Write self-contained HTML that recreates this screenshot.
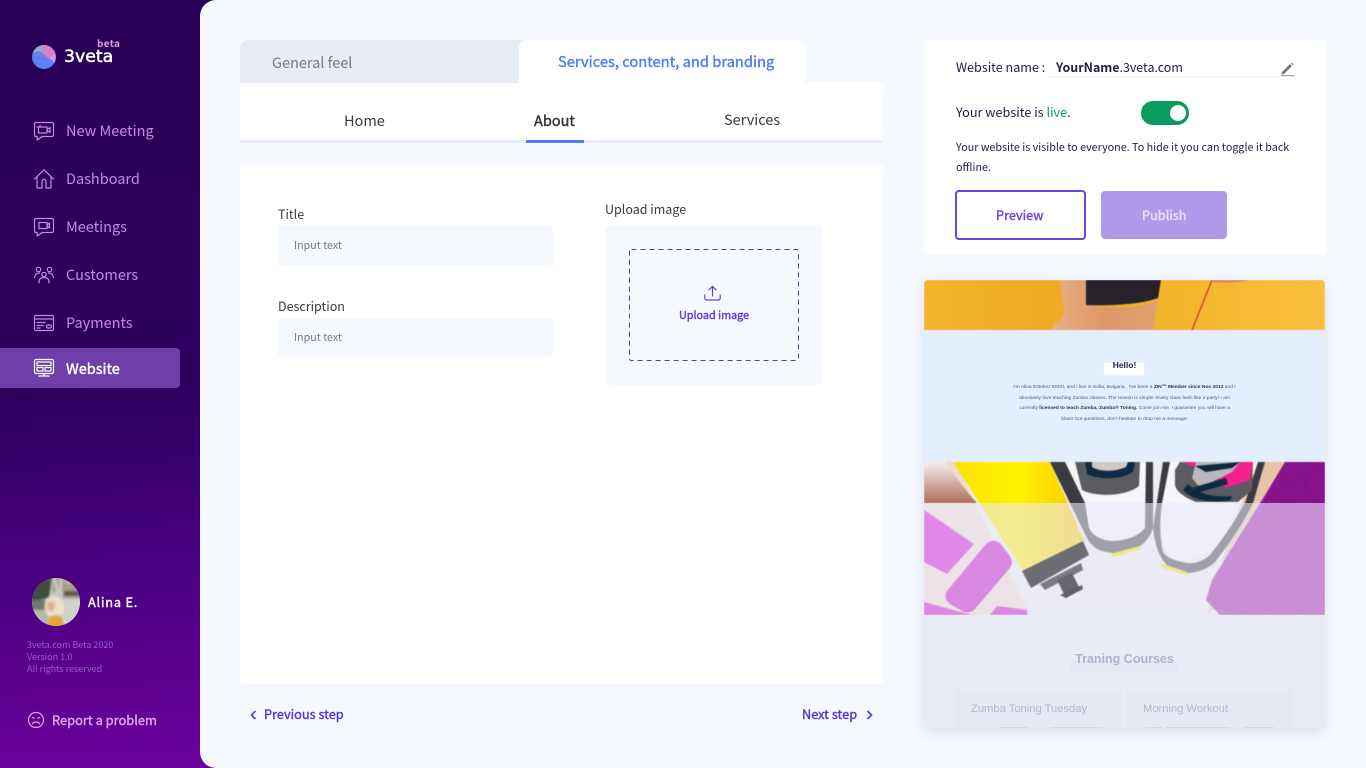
<!DOCTYPE html>
<html lang="en"><head><meta charset="utf-8"><title>3veta Website</title>
<style>
*{box-sizing:border-box}
html,body{margin:0;padding:0;width:1366px;height:768px;overflow:hidden}
body{position:relative;background:#f6f9ff;font-family:"Noto Sans CJK JP","Liberation Sans",sans-serif;color:#333}
.a{position:absolute}
.t{position:absolute;white-space:nowrap;line-height:20px;height:20px}
.sb{-webkit-text-stroke:.38px currentColor}
.nav{font-size:14.5px;color:#c48ae6;left:66px}
svg{position:absolute;overflow:visible}
.ic{fill:none;stroke:#c48ae6;stroke-width:1.2;stroke-linecap:round;stroke-linejoin:round}
</style></head><body>
<div class="a" style="left:0;top:0;width:220px;height:768px;background:linear-gradient(176deg,#2a0055 0%,#2d005e 50%,#48007f 73%,#6c009e 100%)"></div>

<!-- logo -->
<svg style="left:32px;top:45px" width="24" height="24" viewBox="0 0 24 24">
<defs><linearGradient id="lg" x1="0" y1="1" x2=".6" y2="0"><stop offset="0" stop-color="#3f8bf5"/><stop offset=".55" stop-color="#6a7cf0"/><stop offset="1" stop-color="#a98bee"/></linearGradient></defs>
<circle cx="12" cy="12" r="12" fill="url(#lg)"/>
<path d="M12 0A12 12 0 0 1 23 8C21 11 18 13 15 12C12 10 11 5 12 0Z" fill="#e07cc8"/>
<path d="M12 0C6 0 2 4 1 8C5 5 10 6 13 10C11 6 11 3 12 0Z" fill="#8fb4b8"/>
<path d="M23 8A12 12 0 0 1 22 18C20 14 17 13 15 12C18 13 21 11 23 8Z" fill="#c99cf2"/>
</svg>
<div class="t" style="left:64px;top:47px;font:400 17.300px/20px 'DejaVu Sans',sans-serif;color:#fff;-webkit-text-stroke:.5px #fff">3veta</div>
<div class="t" style="left:97px;top:33px;font-size:10px;font-weight:700;color:#dc9ede;letter-spacing:.3px">beta</div>

<!-- nav -->
<div class="t nav" style="top:121px">New Meeting</div>
<div class="t nav" style="top:169px">Dashboard</div>
<div class="t nav" style="top:217px">Meetings</div>
<div class="t nav" style="top:265px">Customers</div>
<div class="t nav" style="top:313px">Payments</div>
<div class="a" style="left:0;top:348px;width:180px;height:40px;background:#6f3ea9;border-radius:0 4px 4px 0"></div>
<div class="t sb" style="left:66px;top:359px;font-size:14.500px;color:#fff">Website</div>

<svg class="ic" style="left:34px;top:122px" width="20" height="20" viewBox="0 0 20 20"><path d="M2 .5H18A1.5 1.5 0 0 1 19.500 2V13A1.500 1.500 0 0 1 18 14.500H8L3.500 18L3 14.500H2A1.500 1.500 0 0 1 .5 13V2A1.500 1.500 0 0 1 2 .5Z"/><path d="M4.500 5H13V11H4.500ZM13 7.500L16 5.500V10.500L13 8.500M3 5H6M6 3.500V5"/></svg>
<svg class="ic" style="left:34px;top:169px" width="20" height="20" viewBox="0 0 20 20"><path d="M.5 10L10 .8L19.500 10M3 8V19H8V12.500A2 2 0 0 1 12 12.500V19H17V8"/></svg>
<svg class="ic" style="left:34px;top:218px" width="20" height="20" viewBox="0 0 20 20"><path d="M2 .5H18A1.500 1.500 0 0 1 19.500 2V13A1.500 1.500 0 0 1 18 14.500H8L3.500 18L3 14.500H2A1.500 1.500 0 0 1 .5 13V2A1.500 1.500 0 0 1 2 .5Z"/><path d="M5 4.500H13V10.500H5ZM13 7L15.500 5V10L13 8"/></svg>
<svg class="ic" style="left:34px;top:266px" width="20" height="18" viewBox="0 0 20 18"><circle cx="4.500" cy="3.500" r="2.200"/><circle cx="15.500" cy="3.500" r="2.200"/><circle cx="10" cy="8.500" r="2.200"/><path d="M.5 11.500C1 8 3 7 5.500 7M19.500 11.500C19 8 17 7 14.500 7M5 17V15.500C5 12.500 7.500 11.500 10 11.500C12.500 11.500 15 12.500 15 15.500V17"/></svg>
<svg class="ic" style="left:34px;top:315px" width="20" height="16" viewBox="0 0 20 16"><rect x=".5" y=".5" width="19" height="15" rx="1.500"/><path d="M.5 4H19.500M3 7.500H11M3 10.500H9M3 13H6"/><rect x="12.500" y="10" width="5" height="3" rx="1.500"/></svg>
<svg class="ic" style="left:34px;top:359px;stroke:#fff" width="20" height="18" viewBox="0 0 20 18"><rect x=".5" y=".5" width="19" height="14" rx="1.500"/><rect x="3" y="3" width="14" height="3.500"/><rect x="3" y="8.500" width="6" height="3.500"/><rect x="11" y="8.500" width="6" height="3.500"/><path d="M10 14.500V17M5 17H15"/></svg>

<!-- avatar -->
<svg style="left:32px;top:578px" width="48" height="48" viewBox="0 0 48 48">
<defs><clipPath id="av"><circle cx="24" cy="24" r="24"/></clipPath><filter id="b1"><feGaussianBlur stdDeviation="1"/></filter></defs>
<g clip-path="url(#av)"><rect width="48" height="48" fill="#c5c8c0"/>
<g filter="url(#b1)"><path d="M-2 -2H20L17 20L-2 24Z" fill="#3f4d3e"/><path d="M20 -2H36L34 14H20Z" fill="#a8a899"/><path d="M22 0L26 14M29 0L28 14" stroke="#d4d2c6" stroke-width="2"/><path d="M31 6H50V20H31Z" fill="#a39a88"/><path d="M32 13H50V18H32Z" fill="#5f5a50"/><path d="M-2 22H14V32H-2Z" fill="#70786c"/><path d="M-2 32H16V50H-2Z" fill="#b4baaf"/><path d="M30 22H50V50H30Z" fill="#cfd3ce"/>
<path d="M13 30C12 22 16 18 22 18C28 18 33 24 32 31C32 35 30 38 26 38H18C15 38 13 34 13 30Z" fill="#ebe1c7"/><ellipse cx="19" cy="28" rx="4" ry="5" fill="#d9b097"/>
<path d="M15 50C15 41 18 37 23 37C29 37 32 41 32 50Z" fill="#e3a838"/></g></g></svg>
<div class="t sb" style="left:88px;top:592px;font-size:12.750px;color:#fff;letter-spacing:.8px">Alina E.</div>
<div class="t" style="left:27px;top:635px;font-size:9px;color:#9b5cc9">3veta.com Beta 2020</div>
<div class="t" style="left:27px;top:647px;font-size:9px;color:#9b5cc9">Version 1.0</div>
<div class="t" style="left:27px;top:659px;font-size:9px;color:#9b5cc9">All rights reserved</div>
<svg class="ic" style="left:28px;top:712px;stroke:#dba6ee" width="16" height="16" viewBox="0 0 16 16"><circle cx="8" cy="8" r="7.500"/><path d="M4.500 11.500C6 9.500 10 9.500 11.500 11.500M4.500 5.500L6 6.200M11.500 5.500L10 6.200"/></svg>
<div class="t sb" style="left:52px;top:710px;font-size:12.850px;color:#dba6ee">Report a problem</div>

<!-- main -->
<div class="a" style="left:200px;top:0;width:1166px;height:768px;background:#f6f9ff;border-radius:16px 0 0 16px"></div>

<!-- tabs -->
<div class="a" style="left:240px;top:40px;width:290px;height:43px;background:#e8ecf5;border-radius:8px 0 0 0"></div>
<div class="a" style="left:519px;top:40px;width:286px;height:44px;background:#fff;border-radius:8px 8px 0 0"></div>
<div class="t" style="left:272px;top:53px;font-size:14.500px;color:#777a80">General feel</div>
<div class="t sb" style="left:558px;top:52px;font-size:14.700px;color:#4f7ef6">Services, content, and branding</div>
<div class="a" style="left:240px;top:83px;width:643px;height:57px;background:#fff"></div>
<div class="a" style="left:240px;top:140px;width:643px;height:3px;background:#e9eef8"></div>
<div class="a" style="left:526px;top:140px;width:58px;height:3px;background:#4f7ef6"></div>
<div class="t" style="left:344px;top:111px;font-size:14.500px;color:#3a3a3a">Home</div>
<div class="t sb" style="left:534px;top:111px;font-size:14.500px;color:#333">About</div>
<div class="t" style="left:724px;top:110px;font-size:14.500px;color:#3a3a3a">Services</div>

<!-- form -->
<div class="a" style="left:240px;top:165px;width:643px;height:519px;background:#fff;border-radius:2px"></div>
<div class="t" style="left:278px;top:204px;font-size:12.500px;color:#3a3a3a">Title</div>
<div class="a" style="left:278px;top:225px;width:275px;height:40px;background:#f6f9ff;border-radius:4px"></div>
<div class="t" style="left:294px;top:236px;font-size:10.700px;color:#777">Input text</div>
<div class="t" style="left:278px;top:296px;font-size:12.500px;color:#3a3a3a">Description</div>
<div class="a" style="left:278px;top:317px;width:275px;height:40px;background:#f6f9ff;border-radius:4px"></div>
<div class="t" style="left:294px;top:328px;font-size:10.700px;color:#777">Input text</div>
<div class="t" style="left:605px;top:199px;font-size:12.500px;color:#3a3a3a">Upload image</div>
<div class="a" style="left:605px;top:225px;width:218px;height:160px;background:#f6f9ff;border-radius:6px"></div>
<svg style="left:629px;top:249px" width="170" height="112"><rect x=".5" y=".5" width="169" height="111" rx="2" fill="none" stroke="#5a2fd8" stroke-width="1" stroke-dasharray="5 4"/></svg>
<svg style="left:704px;top:285px" width="17" height="16" viewBox="0 0 17 16" fill="none" stroke="#6a3fdc" stroke-width="1.200" stroke-linecap="round" stroke-linejoin="round"><path d="M8.500 11V1.500M5 4.800L8.500 1.300L12 4.800M.8 10V13A2 2 0 0 0 2.800 15H14.200A2 2 0 0 0 16.200 13V10"/></svg>
<div class="t sb" style="left:679px;top:305px;font-size:10.800px;color:#6238dc">Upload image</div>

<!-- steps -->
<svg style="left:250px;top:710px" width="7" height="10" viewBox="0 0 7 10" fill="none" stroke="#5a35d9" stroke-width="1.600"><path d="M5.500 1L1.500 5L5.500 9"/></svg>
<div class="t sb" style="left:264px;top:704px;font-size:12.750px;color:#5a35d9">Previous step</div>
<div class="t sb" style="left:802px;top:704px;font-size:12.750px;color:#5a35d9">Next step</div>
<svg style="left:866px;top:710px" width="7" height="10" viewBox="0 0 7 10" fill="none" stroke="#5a35d9" stroke-width="1.600"><path d="M1.500 1L5.500 5L1.500 9"/></svg>

<!-- right card -->
<div class="a" style="left:924px;top:40px;width:402px;height:215px;background:#fff;border-radius:4px"></div>
<div class="t" style="left:956px;top:57px;font-size:12.600px;color:#1e1e4e">Website name :</div>
<div class="t" style="left:1056px;top:57px;font-size:12.450px;color:#1e1e4e"><b>YourName</b>.3veta.com</div>
<div class="a" style="left:1049px;top:76px;width:246px;height:1px;background:#f0f1f4"></div>
<svg style="left:1281px;top:62px" width="13" height="14" viewBox="0 0 13 14"><path d="M1 10L9 2L11 4L3 12L.6 12.500Z" fill="#777"/><path d="M9.800 1.200L10.600.6L12.400 2.400L11.800 3.200Z" fill="#777"/><path d="M0 13.500H13" stroke="#999" stroke-width="1"/></svg>
<div class="t" style="left:956px;top:102px;font-size:12.700px;color:#1e1e4e">Your website is <span style="color:#0b9b60">live</span>.</div>
<div class="a" style="left:1141px;top:101px;width:48px;height:24px;border-radius:12px;background:#0a9b5f"></div>
<div class="a" style="left:1170px;top:105px;width:16px;height:16px;border-radius:50%;background:#fff"></div>
<div class="t" style="left:956px;top:138px;font-size:10.750px;color:#1e1e4e">Your website is visible to everyone. To hide it you can toggle it back</div>
<div class="t" style="left:956px;top:158px;font-size:10.750px;color:#1e1e4e">offline.</div>
<div class="a" style="left:955px;top:190px;width:131px;height:50px;border:2px solid #6c44dc;border-radius:4px;background:#fff"></div>
<div class="t sb" style="left:996px;top:205px;font-size:12.750px;color:#6c44dc">Preview</div>
<div class="a" style="left:1101px;top:191px;width:126px;height:48px;border-radius:4px;background:#af99e9"></div>
<div class="t sb" style="left:1142px;top:205px;font-size:12.750px;color:#e9e2fa">Publish</div>

<!-- preview -->
<div class="a" style="left:924px;top:280px;width:401px;height:448px;box-shadow:0 4px 14px rgba(120,130,170,.22);border-radius:4px;background:#e9ecf5"></div>
<div class="a" style="left:924px;top:280px;width:401px;height:448px;overflow:hidden;border-radius:4px;background:#e9ecf5">
<svg style="left:0;top:0;filter:blur(.6px)" width="401" height="448" viewBox="924 280 401 448">
<defs>
<linearGradient id="y1" x1="0" x2="1"><stop offset="0" stop-color="#f4b62d"/><stop offset=".3" stop-color="#eeaa24"/><stop offset=".7" stop-color="#f5b730"/><stop offset="1" stop-color="#f8c03c"/></linearGradient>
<linearGradient id="sk" x1="0" x2="0" y1="0" y2="1"><stop offset="0" stop-color="#f7efee"/><stop offset="1" stop-color="#b0705a"/></linearGradient>
<linearGradient id="yb" x1="0" x2="1" y1="0" y2="0"><stop offset="0" stop-color="#fbe300"/><stop offset=".5" stop-color="#fff200"/><stop offset="1" stop-color="#fdc800"/></linearGradient>
<linearGradient id="tor" x1="0" x2="1"><stop offset="0" stop-color="#eab088"/><stop offset=".5" stop-color="#dd9868"/><stop offset="1" stop-color="#e2a070"/></linearGradient>
<filter id="nz" x="0" y="0" width="100%" height="100%"><feTurbulence type="fractalNoise" baseFrequency=".7" numOctaves="2" seed="4"/><feColorMatrix values="0 0 0 0 .2  0 0 0 0 0  0 0 0 0 .25  0 0 0 2.2 -.9"/><feComposite in2="SourceGraphic" operator="in"/></filter>
</defs>
<!-- banner -->
<rect x="924" y="280" width="401" height="50" fill="url(#y1)"/>
<path d="M1060 280H1087L1086 304C1105 309 1140 309 1158 300L1153 330H1050C1056 322 1062 320 1064 312Z" fill="url(#tor)"/>
<path d="M1086 280H1161L1158 298C1140 305 1105 306 1086 305Z" fill="#27222a"/>
<path d="M1212 280L1192 330" stroke="#cf3a28" stroke-width="1.300"/>
<path d="M1212 280H1249C1240 283 1222 283 1212 282Z" fill="#d98a5c"/>
<!-- about -->
<rect x="924" y="330" width="401" height="132" fill="#e4eefe"/>
<rect x="1104" y="363" width="40" height="12" fill="#fff"/>
<!-- photo -->
<rect x="924" y="462" width="401" height="153" fill="#ecedf3"/>
<path d="M924 462H955L1030 615H924Z" fill="#efd9d0"/>
<path d="M924 462H945C955 475 965 490 977 503H924Z" fill="url(#sk)"/>
<path d="M1028 615C1028 600 1025 585 1018 570L1090 620Z" fill="#ecedf3"/>
<path d="M1258 462H1325V520L1207 615C1222 560 1240 500 1258 462Z" fill="#e6c4a8"/>
<path d="M953 462H1050L1084 541L1023 571Z" fill="url(#yb)"/>
<!-- left dumbbell -->
<path d="M924 510L974 544L947 574L924 562Z" fill="#d200d1"/>
<path d="M947 591L986 544Q992 538 1000 543L1010 556Q1014 563 1009 569L975 609Q970 614 964 612L950 604Q943 598 947 591Z" fill="#c000c8"/>
<path d="M924 602L972 615H924ZM990 615L997 606L1027 610L1027 615Z" fill="#c800c8"/>
<!-- shoes -->
<path d="M1068 462H1148C1152 490 1154 525 1148 535C1130 552 1100 552 1088 535C1080 515 1072 485 1068 462Z" fill="#f6f6fa"/>
<path d="M1170 462H1258C1250 485 1238 515 1222 540C1208 560 1175 568 1165 552C1158 530 1162 490 1170 462Z" fill="#f6f6fa"/>
<path d="M1050 462H1065L1085 503L1089 528Q1095 540 1113 541Q1135 540 1145 528L1146 462H1153L1153 528Q1145 553 1113 553Q1094 552 1087 538Z" fill="#3a3a40"/>
<path d="M1170 462H1163L1153 528Q1158 573 1187 573Q1205 572 1215 562Q1240 530 1253 503L1265 462H1258L1245 503Q1230 530 1210 555Q1200 564 1187 563Q1168 560 1163 552Q1158 530 1162 503Z" fill="#3a3a40"/>
<path d="M1110 554L1140 546L1142 549L1114 557ZM1160 563L1187 572L1190 576L1163 568Z" fill="#f7e100"/>
<path d="M1075 462H1140L1139 486C1125 497 1095 497 1082 490Z" fill="#5b5b60"/>
<path d="M1085 462H1135L1133 472C1120 480 1100 480 1087 474Z" fill="#0f2a42"/>
<path d="M1092 462H1128L1126 467C1115 472 1100 472 1092 467Z" fill="#cfc9c5"/>
<path d="M1175 470L1180 462H1253L1252 490L1238 502H1196C1186 498 1176 492 1175 485Z" fill="#5a5a60"/>
<path d="M1182 462H1253L1250 480L1226 488L1216 475Z" fill="#f5208c"/>
<path d="M1196 462H1240L1232 472L1200 488L1192 478Z" fill="#b8b8bc"/>
<path d="M1195 466L1240 462L1232 468L1206 472ZM1191 488L1226 478L1228 484L1200 492ZM1183 490C1192 500 1210 504 1231 500L1232 496C1215 498 1198 494 1188 484Z" fill="#0e2840"/>
<!-- towel -->
<path d="M1285 462H1325V615H1220L1206 600L1212 580L1262 500Z" fill="#a818b0"/>
<path d="M1285 462H1325V503H1262Z" fill="#8a1a8a"/>
<path d="M1285 462H1325V615H1220L1206 600L1212 580L1262 500Z" filter="url(#nz)"/>
<rect x="924" y="615" width="401" height="113" fill="#e9ecf5"/>
</svg>
<!-- overlay on faded part -->
<div class="a" style="left:0;top:223px;width:401px;height:225px;background:rgba(232,235,246,.58)"></div>
<!-- bottle cap stays dark -->
<svg style="left:0;top:0;filter:blur(.5px)" width="401" height="448" viewBox="924 280 401 448">
<path d="M1022 571L1083 541L1089 555L1031 588Z" fill="#6c6d73"/>
<path d="M1040 584L1081 563L1083 570L1045 590Z" fill="#7a7b82"/>
<path d="M1057 580L1072 573L1079 587L1064 594Z" fill="#66676d"/>
<path d="M1060 595L1082 585L1083 589L1066 598Z" fill="#5f6066"/>
</svg>
<div class="a" style="left:0;top:335px;width:401px;height:113px;background:#e9ecf5"></div>
<!-- about text -->
<div class="t" style="left:0;width:401px;top:75px;text-align:center;font:700 8.500px/20px 'Liberation Sans',sans-serif;color:#25254f;filter:blur(.25px)">Hello!</div>
<div class="a" style="left:0;width:401px;top:103px;text-align:center;font:4.900px/10.670px 'Liberation Sans',sans-serif;color:#56567e;white-space:nowrap;filter:blur(.2px)">
I'm Alina Estebez EMSI, and I live in Sofia, Bulgaria . I've been a <b style="color:#2f2f58">ZIN™ Member since Nov 2012</b> and I<br>absolutely love teaching Zumba classes. The reason is simple: Every class feels like a party! I am<br>currently <b style="color:#2f2f58">licensed to teach Zumba, Zumba® Toning.</b> Come join me, I guarantee you will have a<br>blast! Got questions, don't hesitate to drop me a message!
</div>
<!-- courses -->
<div class="a" style="left:146px;top:380px;width:108px;height:11px;background:#e5e8f3"></div>
<div class="t" style="left:0;width:401px;top:369px;text-align:center;font:700 12.500px/20px 'Liberation Sans',sans-serif;color:#b1b4ca">Traning Courses</div>
<div class="a" style="left:32px;top:411px;width:166px;height:37px;background:#e6e8f2"></div>
<div class="a" style="left:203px;top:411px;width:165px;height:37px;background:#e6e8f2"></div>
<div class="t" style="left:47px;top:419px;font:11.200px/20px 'Liberation Sans',sans-serif;color:#b5b8cd">Zumba Toning Tuesday</div>
<div class="t" style="left:219px;top:419px;font:11.200px/20px 'Liberation Sans',sans-serif;color:#b5b8cd">Morning Workout</div>
<div class="a" style="left:76px;top:447px;width:28px;height:1px;background:#d5d8e6"></div>
<div class="a" style="left:126px;top:447px;width:53px;height:1px;background:#d5d8e6"></div>
<div class="a" style="left:221px;top:447px;width:17px;height:1px;background:#d5d8e6"></div>
<div class="a" style="left:242px;top:447px;width:64px;height:1px;background:#d5d8e6"></div>
<div class="a" style="left:320px;top:447px;width:30px;height:1px;background:#d5d8e6"></div>
</div>
</body></html>
